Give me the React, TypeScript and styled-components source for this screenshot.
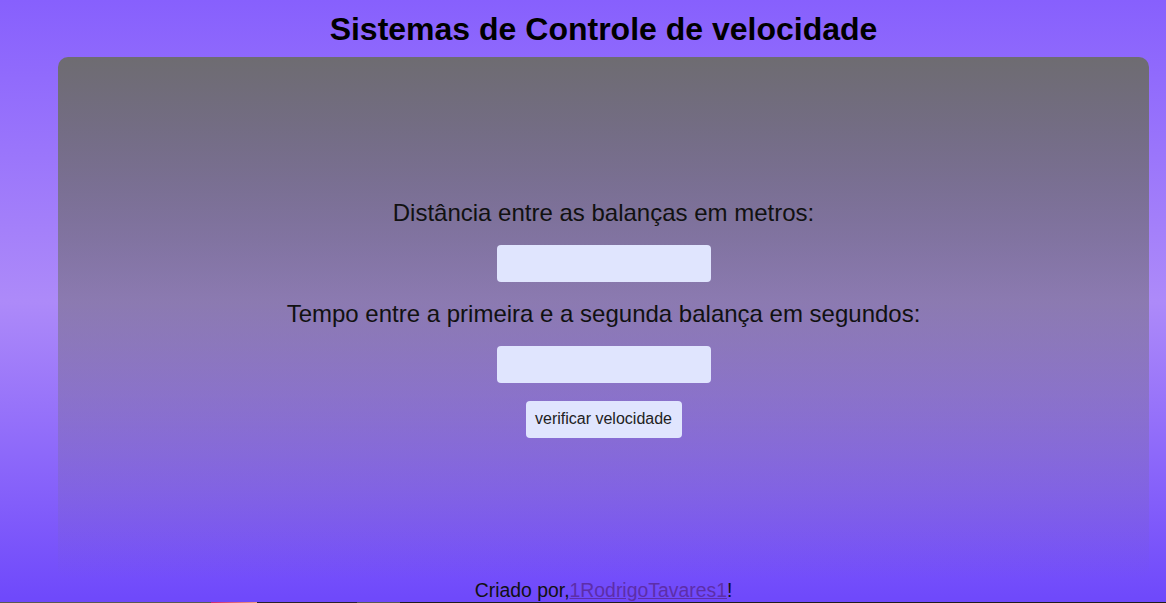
import React from "react";
import styled, { createGlobalStyle } from "styled-components";

const Global = createGlobalStyle`
  html, body { margin: 0; padding: 0; }
  body {
    font-family: "Liberation Sans", Arial, sans-serif;
    background: linear-gradient(to bottom, #8760fd 0%, #ad8af9 50%, #6e48fb 100%);
    min-height: 603px;
    overflow: hidden;
  }
`;

const Page = styled.div`
  display: flex;
  flex-direction: column;
  width: 1207px;
  height: 603px;
`;

const Title = styled.h1`
  margin: 0;
  padding-top: 11px;
  height: 57px;
  box-sizing: border-box;
  text-align: center;
  font-size: 32px;
  font-weight: bold;
  color: #000;
`;

const Panel = styled.main`
  margin: 0 58px;
  height: 522px;
  flex: none;
  border-radius: 10px;
  background: linear-gradient(to bottom, #6e6c71 0%, rgba(110, 108, 113, 0) 100%);
  display: flex;
  flex-direction: column;
  align-items: center;
  justify-content: center;
`;

const Label = styled.label`
  font-size: 24px;
  color: #111;
  margin-bottom: 18px;
`;

const Input = styled.input`
  width: 214px;
  height: 37px;
  box-sizing: border-box;
  border: none;
  border-radius: 4px;
  background: #e0e5fe;
  margin-bottom: 18px;
`;

const Button = styled.button`
  width: 156px;
  height: 37px;
  border: none;
  border-radius: 4px;
  background: #e0e5fe;
  font-family: "Liberation Sans", Arial, sans-serif;
  font-size: 16px;
  color: #222;
`;

const Footer = styled.footer`
  flex: 1;
  display: flex;
  align-items: flex-end;
  justify-content: center;
  font-size: 19.4px;
  line-height: 23px;
  color: #111;
`;

const Link = styled.a`
  color: #5d2ea8;
`;

const Strip = styled.div`
  display: flex;
  height: 1px;
  flex: none;
`;

const StripPart = styled.div<{ $w: number; $bg: string }>`
  width: ${(p) => p.$w}px;
  flex: ${(p) => (p.$w === 0 ? 1 : "none")};
  background: ${(p) => p.$bg};
`;

export default function App() {
  return (
    <>
      <Global />
      <Page>
        <Title>Sistemas de Controle de velocidade</Title>
        <Panel>
          <Label>Distância entre as balanças em metros:</Label>
          <Input type="text" />
          <Label>Tempo entre a primeira e a segunda balança em segundos:</Label>
          <Input type="text" />
          <Button>verificar velocidade</Button>
        </Panel>
        <Footer>
          <span>
            Criado por,<Link href="#">1RodrigoTavares1</Link>!
          </span>
        </Footer>
        <Strip>
          <StripPart $w={211} $bg="#5a5a50" />
          <StripPart $w={46} $bg="linear-gradient(to right, #d02a6a, #f0a080)" />
          <StripPart $w={100} $bg="#2a2228" />
          <StripPart $w={43} $bg="#5a5a50" />
          <StripPart $w={0} $bg="#201c1c" />
        </Strip>
      </Page>
    </>
  );
}
